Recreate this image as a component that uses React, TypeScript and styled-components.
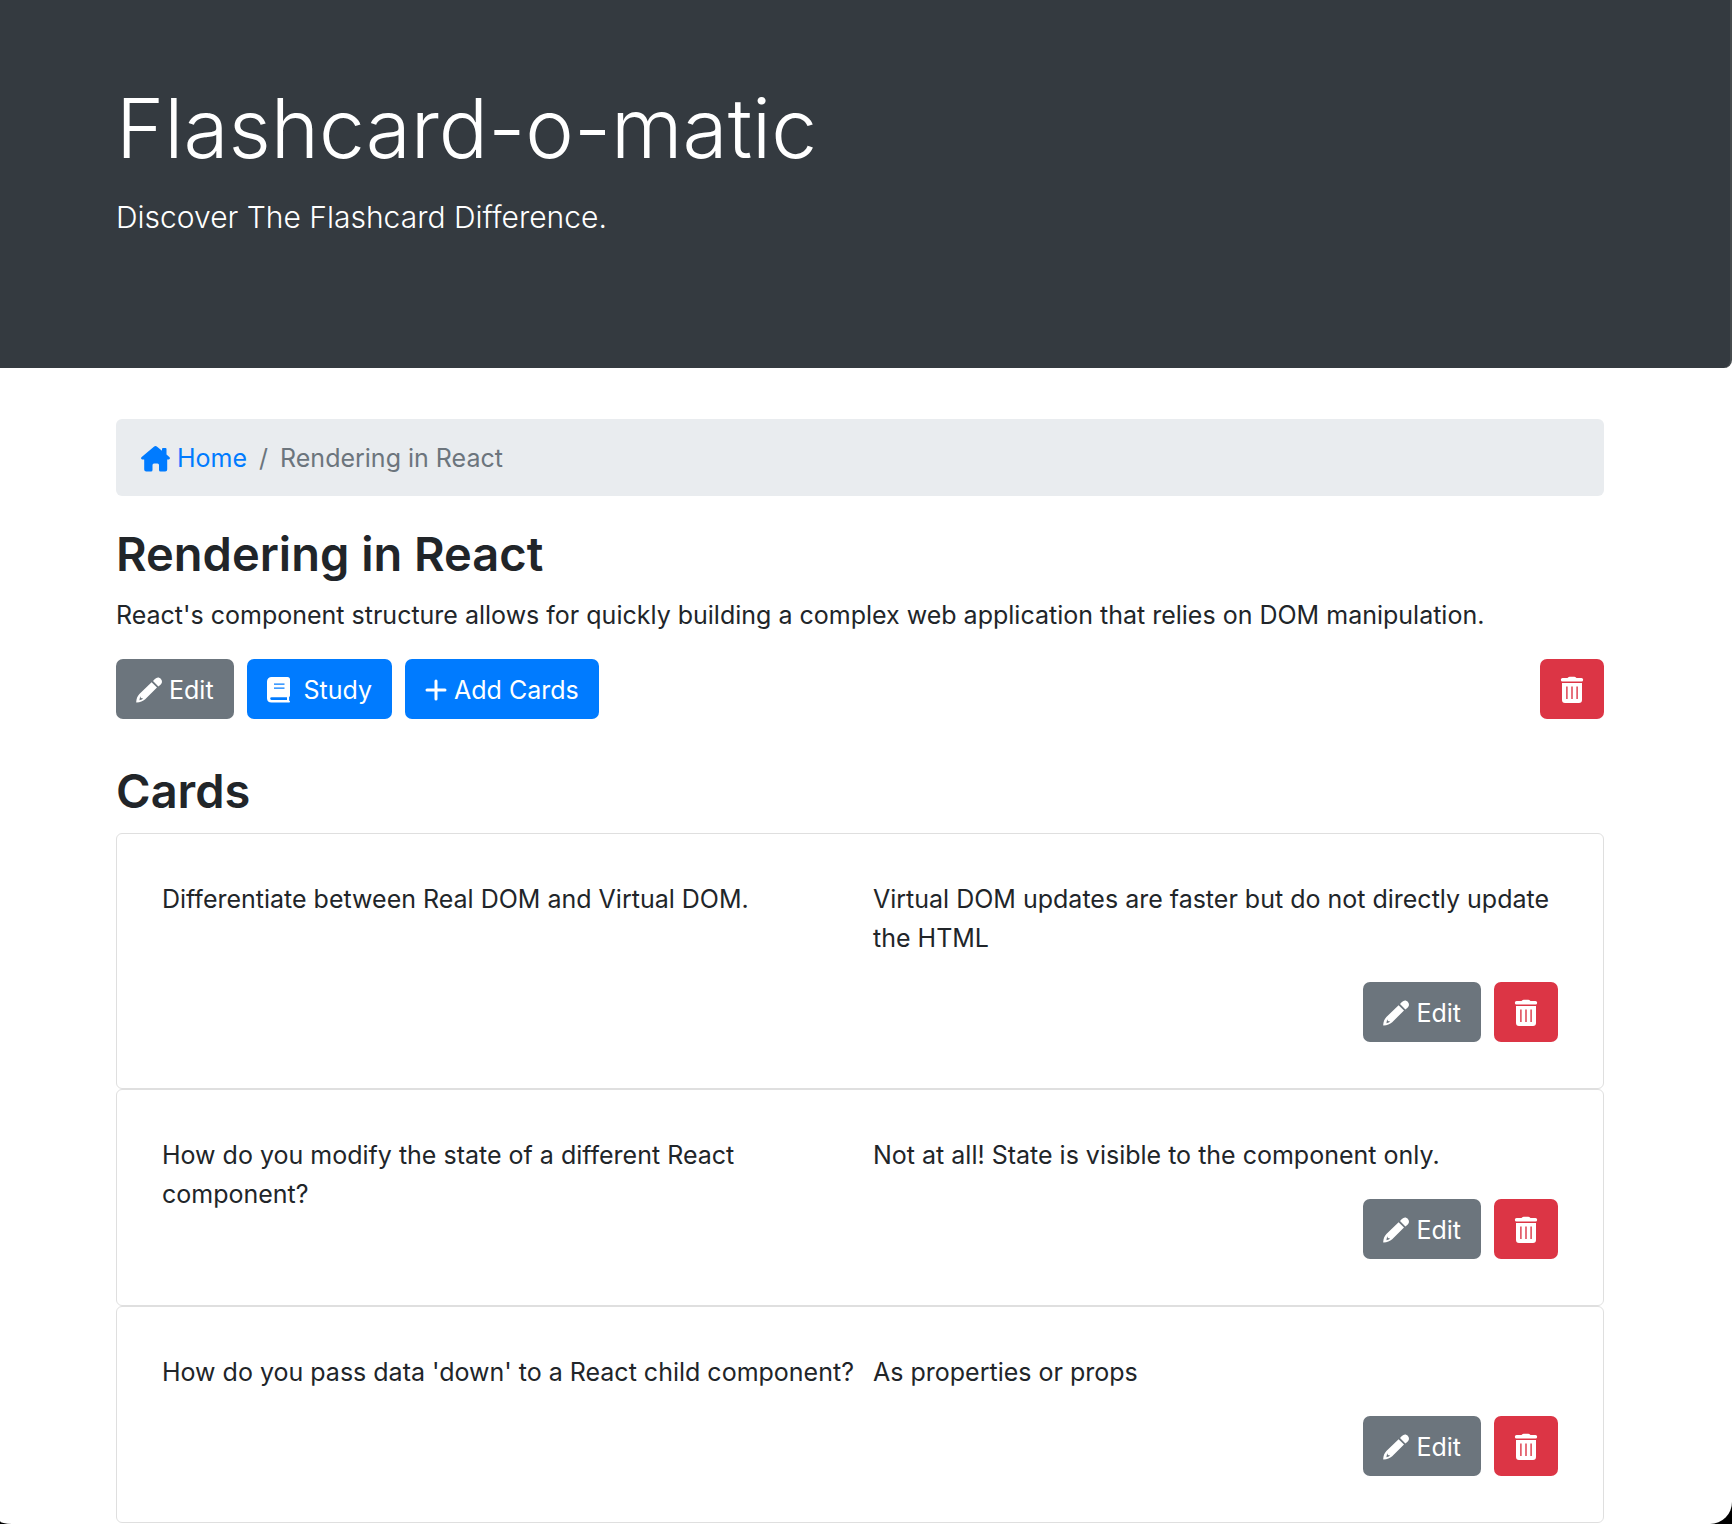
import React from 'react';
import styled, { createGlobalStyle } from 'styled-components';

const GlobalStyle = createGlobalStyle`
  *, *::before, *::after { box-sizing: border-box; }
  html { background: #000; }
  body {
    margin: 0;
    color: #212529;
    font-family: Inter, "Liberation Sans", sans-serif;
    font-size: 25px;
    font-weight: 400;
    line-height: 39px;
  }
  h1, h2, h3, p, ol, ul { margin: 0; padding: 0; }
`;

const Page = styled.div`
  min-height: 100vh;
  overflow: hidden;
  background: #fff;
  border-radius: 0 0 22px 12px / 0 0 22px 3px;
`;

const Shell = styled.div`
  padding: 0 128px 0 116px;
`;

const Jumbotron = styled.header`
  height: 368px;
  padding-top: 76px;
  color: #fff;
  background: #343a40;
  border-radius: 0 0 8px 0;
  border-right: 2px solid #464b4e;
`;

const SiteTitle = styled.h1`
  margin-bottom: 11px;
  font-size: 82px;
  font-weight: 300;
  line-height: 106px;
`;

const Lead = styled.p`
  font-size: 30px;
  font-weight: 300;
  line-height: 48px;
`;

const Breadcrumb = styled.nav`
  margin: 51px 0 26px;
  padding: 20px 25px 18px;
  background: #e9ecef;
  border-radius: 6px;
`;

const Trail = styled.ol`
  display: flex;
  list-style: none;
  color: #6c757d;
`;

const Crumb = styled.li`
  & + &::before {
    content: "/";
    padding: 0 12px;
  }
`;

const HomeLink = styled.a`
  display: flex;
  align-items: center;
  gap: 7px;
  color: #007bff;
  text-decoration: none;
`;

const Heading = styled.h2`
  margin-bottom: 10px;
  font-size: 47px;
  font-weight: 600;
  line-height: 64px;
`;

const Description = styled.p`
  margin-bottom: 24px;
`;

const Actions = styled.div`
  display: flex;
  gap: 13px;
  margin-bottom: 40px;
`;

const tones = { secondary: '#6c757d', primary: '#007bff', danger: '#dc3545' };

const Button = styled.button<{ $tone: keyof typeof tones; $push?: boolean; $gap?: number }>`
  display: flex;
  align-items: center;
  gap: ${(p) => p.$gap ?? 7}px;
  height: 60px;
  margin: 0 0 0 ${(p) => (p.$push ? 'auto' : '0')};
  padding: 2px 20px 0;
  border: 0;
  border-radius: 7px;
  color: #fff;
  background: ${(p) => tones[p.$tone]};
  font: inherit;
  white-space: nowrap;
  cursor: pointer;
`;

const CardList = styled.ul`
  list-style: none;
`;

const Card = styled.li`
  display: grid;
  grid-template-columns: 1fr 1fr;
  padding: 46px 45px;
  border: 1px solid #dfdfdf;
  border-radius: 6px;
`;

const CardBack = styled.div`
  padding-left: 13px;
`;

const CardActions = styled.div`
  display: flex;
  justify-content: flex-end;
  gap: 13px;
  margin-top: 24px;
`;

const Icon = styled.svg`
  display: block;
  flex: none;
`;

const HomeIcon = () => (
  <Icon width="29" height="26" viewBox="0 0 29 26" fill="currentColor" aria-hidden="true">
    <path d="M12.9.8a2.4 2.4 0 0 1 3.2 0l4.9 4V3.1a1 1 0 0 1 1-1h2.500a1 1 0 0 1 1 1v5.400l2.800 2.500c1.100 1 .6 2.400-.6 2.400h-1.500v10.100a2 2 0 0 1-2 2h-4.700a1.500 1.500 0 0 1-1.500-1.500V19a1.500 1.500 0 0 0-1.500-1.500h-3.500a1.500 1.500 0 0 0-1.500 1.500v5a1.500 1.500 0 0 1-1.500 1.500H5.200a2 2 0 0 1-2-2V13.400H1.300c-1.200 0-1.700-1.400-.6-2.400z" />
  </Icon>
);

const PencilIcon = () => (
  <Icon width="26" height="26" viewBox="0 0 26 26" aria-hidden="true">
    <path fill="currentColor" d="M15.600 5.300l5.400 5.200L9.200 22.200C7 24.200 4 25.300.8 25.500c-.4 0-.6-.2-.6-.6.200-3.200 1.200-6 3.200-8zM17 4l1.900-1.900c2-2 4.300-2 6 0 1.600 1.900 1.400 4-.4 5.600L22.400 9.400z" />
    <path fill="#6c757d" d="M4.200 19.200l.7 1.800 2.200.4-1.300 1.200-2.400.7z" />
  </Icon>
);

const BookIcon = () => (
  <Icon width="23" height="26" viewBox="0 0 23 26" aria-hidden="true">
    <path fill="currentColor" fillRule="evenodd" d="M4.500 0H20.500a2.500 2.500 0 0 1 2.500 2.500v16c0 .8-.4 1.200-.9 1.600v3.400c.6.300.9.600.9 1.100 0 .6-.4 1-1 1H4.500A4.500 4.500 0 0 1 0 21.300V4.500A4.500 4.500 0 0 1 4.500 0zM7 6.500v1.200h10.500V6.500zm0 4v1.200h10.500v-1.200zM4.500 20.300a1.300 1.300 0 0 0 0 2.600H20v-2.600z" />
  </Icon>
);

const PlusIcon = () => (
  <Icon width="22" height="22" viewBox="0 0 22 22" fill="none" stroke="currentColor" strokeWidth="3" strokeLinecap="round" aria-hidden="true">
    <path d="M11 2v18M2 11h18" />
  </Icon>
);

const TrashIcon = () => (
  <Icon width="24" height="28" viewBox="0 0 24 28" fill="currentColor" aria-hidden="true">
    <path d="M7.500 2l.8-.7Q8.900.8 9.600.8h4.800q.7 0 1.300.5l.8.700h5a1.600 1.600 0 0 1 1.600 1.600v.3a1.600 1.600 0 0 1-1.600 1.600h-19A1.600 1.600 0 0 1 .9 3.900v-.3A1.600 1.600 0 0 1 2.500 2z" />
    <path fillRule="evenodd" d="M2 7h20v17a3 3 0 0 1-3 3H5a3 3 0 0 1-3-3zM6.200 10.500v12.500h1.400V10.500zm5.100 0v12.500h1.400V10.500zm5.100 0v12.500h1.400V10.500z" />
  </Icon>
);

const EditButton = () => (
  <Button type="button" $tone="secondary"><PencilIcon />Edit</Button>
);

const DeleteButton = ({ push, label }: { push?: boolean; label: string }) => (
  <Button type="button" $tone="danger" $push={push} aria-label={label}><TrashIcon /></Button>
);

const cards = [
  { front: 'Differentiate between Real DOM and Virtual DOM.', back: 'Virtual DOM updates are faster but do not directly update the HTML' },
  { front: 'How do you modify the state of a different React component?', back: 'Not at all! State is visible to the component only.' },
  { front: "How do you pass data 'down' to a React child component?", back: 'As properties or props' },
];

export default function App() {
  return (
    <Page>
      <GlobalStyle />
      <Jumbotron>
        <Shell>
          <SiteTitle>Flashcard-o-matic</SiteTitle>
          <Lead>Discover The Flashcard Difference.</Lead>
        </Shell>
      </Jumbotron>
      <Shell as="main">
        <Breadcrumb aria-label="breadcrumb">
          <Trail>
            <Crumb><HomeLink href="#"><HomeIcon />Home</HomeLink></Crumb>
            <Crumb aria-current="page">Rendering in React</Crumb>
          </Trail>
        </Breadcrumb>
        <Heading>Rendering in React</Heading>
        <Description>React's component structure allows for quickly building a complex web application that relies on DOM manipulation.</Description>
        <Actions>
          <EditButton />
          <Button type="button" $tone="primary" $gap={14}><BookIcon />Study</Button>
          <Button type="button" $tone="primary"><PlusIcon />Add Cards</Button>
          <DeleteButton push label="Delete deck" />
        </Actions>
        <Heading>Cards</Heading>
        <CardList>
          {cards.map((card) => (
            <Card key={card.front}>
              <p>{card.front}</p>
              <CardBack>
                <p>{card.back}</p>
                <CardActions>
                  <EditButton />
                  <DeleteButton label="Delete card" />
                </CardActions>
              </CardBack>
            </Card>
          ))}
        </CardList>
      </Shell>
    </Page>
  );
}
